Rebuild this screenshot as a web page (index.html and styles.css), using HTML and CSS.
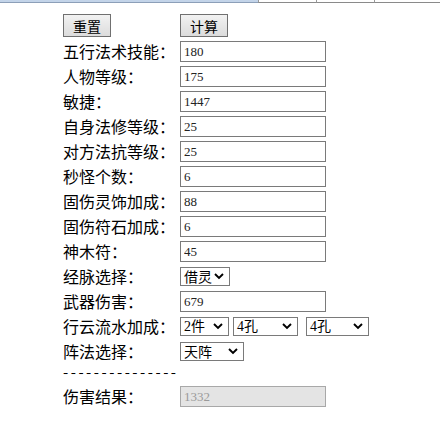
FILE: index.html
```html
<!DOCTYPE html>
<html>
<head>
<meta charset="utf-8">
<link rel="stylesheet" href="styles.css">
</head>
<body>
<div class="topstrip">
  <div class="ts-blue"></div>
  <div class="ts-cell"></div>
  <div class="ts-cell"></div>
  <div class="ts-cell last"></div>
</div>
<form class="calc">
  <div class="btnrow">
    <button type="button" class="btn">重置</button>
    <button type="button" class="btn">计算</button>
  </div>
  <div class="row"><label class="lbl">五行法术技能：</label><input class="txt" value="180"></div>
  <div class="row"><label class="lbl">人物等级：</label><input class="txt" value="175"></div>
  <div class="row"><label class="lbl">敏捷：</label><input class="txt" value="1447"></div>
  <div class="row"><label class="lbl">自身法修等级：</label><input class="txt" value="25"></div>
  <div class="row"><label class="lbl">对方法抗等级：</label><input class="txt" value="25"></div>
  <div class="row"><label class="lbl">秒怪个数：</label><input class="txt" value="6"></div>
  <div class="row"><label class="lbl">固伤灵饰加成：</label><input class="txt" value="88"></div>
  <div class="row"><label class="lbl">固伤符石加成：</label><input class="txt" value="6"></div>
  <div class="row"><label class="lbl">神木符：</label><input class="txt" value="45"></div>
  <div class="row"><label class="lbl">经脉选择：</label>
    <div class="sel w50"><span class="val">借灵</span><svg class="chev" viewBox="0 0 10 7" width="10" height="7"><path d="M1 1 L5 5 L9 1" fill="none" stroke="#000" stroke-width="1.9"/></svg></div>
  </div>
  <div class="row"><label class="lbl">武器伤害：</label><input class="txt" value="679"></div>
  <div class="row"><label class="lbl">行云流水加成：</label>
    <div class="sels">
      <div class="sel w49"><span class="val num">2件</span><svg class="chev" viewBox="0 0 10 7" width="10" height="7"><path d="M1 1 L5 5 L9 1" fill="none" stroke="#000" stroke-width="1.9"/></svg></div>
      <div class="sel w65"><span class="val num">4孔</span><svg class="chev" viewBox="0 0 10 7" width="10" height="7"><path d="M1 1 L5 5 L9 1" fill="none" stroke="#000" stroke-width="1.9"/></svg></div>
      <div class="sel w63 gap2"><span class="val num">4孔</span><svg class="chev" viewBox="0 0 10 7" width="10" height="7"><path d="M1 1 L5 5 L9 1" fill="none" stroke="#000" stroke-width="1.9"/></svg></div>
    </div>
  </div>
  <div class="row"><label class="lbl">阵法选择：</label>
    <div class="sel w64"><span class="val">天阵</span><svg class="chev" viewBox="0 0 10 7" width="10" height="7"><path d="M1 1 L5 5 L9 1" fill="none" stroke="#000" stroke-width="1.9"/></svg></div>
  </div>
  <div class="dashrow">---------------</div>
  <div class="row"><label class="lbl">伤害结果：</label><input class="txt result" value="1332" disabled></div>
</form>
</body>
</html>
```
FILE: styles.css
```css
html, body {
  margin: 0;
  padding: 0;
  background: #fff;
}
body {
  font-family: "Noto Sans CJK SC", "Noto Sans", sans-serif;
  color: #000;
}
.topstrip {
  display: flex;
  height: 3px;
}
.ts-blue {
  width: 258px;
  height: 2px;
  background: #c3d4e9;
  border-bottom: 1px solid #8c9fb8;
}
.ts-cell {
  width: 57px;
  height: 2px;
  border-left: 1px solid #999;
  border-bottom: 1px solid #8a8a8a;
}
.ts-cell.last {
  flex: 1;
}
.calc {
  display: flex;
  flex-direction: column;
  padding-left: 63px;
  padding-top: 11px;
}
.btnrow {
  display: flex;
  gap: 69px;
  height: 25px;
  align-items: flex-start;
}
.btn {
  width: 48px;
  height: 23px;
  margin: 0;
  padding: 0;
  border: 1px solid #707070;
  border-radius: 0;
  background: linear-gradient(#f2f2f2, #dcdcdc);
  font-family: "Noto Sans CJK SC", sans-serif;
  font-size: 14px;
  color: #000;
  line-height: 20px;
}
.row {
  display: flex;
  align-items: center;
  height: 25px;
}
.lbl {
  width: 117px;
  font-size: 16px;
  line-height: 25px;
  white-space: nowrap;
}
.txt {
  box-sizing: border-box;
  width: 146px;
  height: 21px;
  margin: 0;
  padding: 0 3px;
  border: 1px solid #7a7a7a;
  border-radius: 0;
  font-family: "Liberation Serif", serif;
  font-size: 13px;
  color: #222;
  background: #fff;
  outline: none;
}
.txt.result {
  background: #e4e4e4;
  border-color: #a8a8a8;
  color: #9a9a9a;
}
.sels {
  display: flex;
  gap: 4px;
}
.sel {
  position: relative;
  box-sizing: border-box;
  height: 19px;
  border: 1px solid #7a7a7a;
  background: #fff;
  display: flex;
  align-items: center;
  overflow: hidden;
}
.val {
  padding-left: 3px;
  font-family: "Noto Sans CJK SC", sans-serif;
  font-size: 14px;
  line-height: 17px;
  color: #000;
  white-space: nowrap;
}
.val.num {
  font-family: "Liberation Serif", "Noto Sans CJK SC", serif;
}
.chev {
  position: absolute;
  right: 5px;
  top: 5px;
  pointer-events: none;
}
.w50 { width: 50px; }
.w49 { width: 49px; }
.w65 { width: 65px; }
.w63 { width: 63px; }
.w64 { width: 64px; }
.gap2 { margin-left: 4px; }
.dashrow {
  height: 20px;
  font-size: 15px;
  line-height: 15px;
  letter-spacing: 2.5px;
  white-space: nowrap;
}
```
